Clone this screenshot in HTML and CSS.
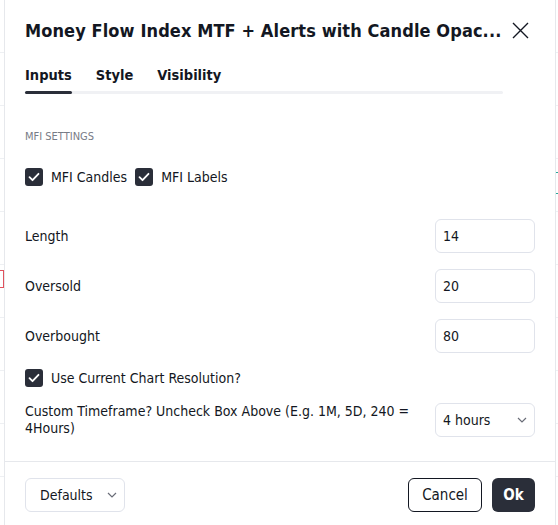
FILE: index.html
```html
<!DOCTYPE html>
<html>
<head>
<meta charset="utf-8">
<link rel="stylesheet" href="styles.css">
</head>
<body>
<div class="page">
  <div class="chart-mark red"></div>
  <div class="chart-mark teal"></div>
  <div class="dialog">
    <div class="header">
      <div class="title">Money Flow Index MTF + Alerts with Candle Opac...</div>
      <svg class="close" width="17" height="17" viewBox="0 0 17 17"><path d="M1 1l15 15M16 1L1 16" stroke="#131722" stroke-width="1.4" fill="none"/></svg>
    </div>
    <div class="tabs">
      <div class="tab active">Inputs</div>
      <div class="tab">Style</div>
      <div class="tab">Visibility</div>
    </div>
    <div class="tabline"><div class="tabind"></div></div>
    <div class="content">
      <div class="section">MFI SETTINGS</div>
      <div class="checks">
        <label class="check"><span class="box"><svg width="12" height="10" viewBox="0 0 12 10"><path d="M1.5 5.2l3 3 6-6.4" stroke="#fff" stroke-width="1.8" fill="none" stroke-linecap="round" stroke-linejoin="round"/></svg></span>MFI Candles</label>
        <label class="check"><span class="box"><svg width="12" height="10" viewBox="0 0 12 10"><path d="M1.5 5.2l3 3 6-6.4" stroke="#fff" stroke-width="1.8" fill="none" stroke-linecap="round" stroke-linejoin="round"/></svg></span>MFI Labels</label>
      </div>
      <div class="row first"><span class="label">Length</span><div class="input">14</div></div>
      <div class="row"><span class="label">Oversold</span><div class="input">20</div></div>
      <div class="row"><span class="label">Overbought</span><div class="input">80</div></div>
      <div class="checks single">
        <label class="check"><span class="box"><svg width="12" height="10" viewBox="0 0 12 10"><path d="M1.5 5.2l3 3 6-6.4" stroke="#fff" stroke-width="1.8" fill="none" stroke-linecap="round" stroke-linejoin="round"/></svg></span>Use Current Chart Resolution?</label>
      </div>
      <div class="row tf"><span class="label wrap">Custom Timeframe? Uncheck Box Above (E.g. 1M, 5D, 240 = 4Hours)</span><div class="input select">4 hours<svg width="10" height="6" viewBox="0 0 10 6"><path d="M1 1l4 4 4-4" stroke="#6a6d78" stroke-width="1.2" fill="none"/></svg></div></div>
    </div>
    <div class="footer">
      <div class="btn defaults">Defaults<svg width="10" height="6" viewBox="0 0 10 6"><path d="M1 1l4 4 4-4" stroke="#6a6d78" stroke-width="1.2" fill="none"/></svg></div>
      <div class="spacer"></div>
      <div class="btn cancel">Cancel</div>
      <div class="btn ok">Ok</div>
    </div>
  </div>
</div>
</body>
</html>
```
FILE: styles.css
```css
html, body {
  margin: 0;
  padding: 0;
  background: #fff;
}
body {
  font-family: "DejaVu Sans Condensed", "Lato", sans-serif;
  color: #131722;
}
.page {
  position: relative;
  width: 558px;
  height: 525px;
  overflow: hidden;
  background:
    repeating-linear-gradient(to bottom, transparent 0, transparent 52px, #eef0f3 52px, #eef0f3 53px);
}
.chart-mark {
  position: absolute;
}
.chart-mark.red {
  left: 0;
  top: 270px;
  width: 3px;
  height: 16px;
  border: 1px solid #e0525d;
  border-left: none;
}
.chart-mark.teal {
  right: 0;
  top: 172px;
  width: 2px;
  height: 20px;
  border: 1px solid #26a69a;
  border-right: none;
}
.dialog {
  position: absolute;
  left: 4px;
  top: 0;
  width: 550px;
  height: 525px;
  background: #fff;
  border-left: 1px solid #e6e8ec;
  border-right: 1px solid #e6e8ec;
  display: flex;
  flex-direction: column;
}
.header {
  display: flex;
  align-items: center;
  padding: 17px 26px 0 20px;
  height: 26px;
}
.title {
  flex: 1;
  font-size: 18px;
  font-weight: 700;
  letter-spacing: 0.1px;
  white-space: nowrap;
  overflow: hidden;
}
.close {
  margin-left: 8px;
  flex: none;
}
.tabs {
  display: flex;
  gap: 24px;
  padding: 22px 20px 0 20px;
}
.tab {
  font-size: 14.5px;
  font-weight: 700;
  line-height: 20px;
}
.tabline {
  margin: 6px 52px 0 20px;
  height: 3px;
  background: #f0f1f4;
  border-radius: 2px;
}
.tabind {
  width: 47px;
  height: 3px;
  border-radius: 2px;
  background: #2a2e39;
}
.content {
  flex: 1;
  padding: 0 20px;
}
.section {
  margin-top: 36px;
  font-size: 11px;
  color: #787b86;
  text-transform: uppercase;
  line-height: 14px;
}
.checks {
  display: flex;
  gap: 8px;
  margin-top: 24px;
}
.checks.single {
  margin-top: 16px;
}
.check {
  display: flex;
  align-items: center;
  font-size: 14px;
  line-height: 18px;
}
.box {
  width: 18px;
  height: 18px;
  border-radius: 3px;
  background: #2a2e39;
  display: flex;
  align-items: center;
  justify-content: center;
  margin-right: 8px;
}
.row {
  display: flex;
  align-items: center;
  justify-content: space-between;
  margin-top: 16px;
  font-size: 14px;
}
.row.first {
  margin-top: 33px;
}
.row.tf {
  margin-top: 16px;
}
.label.wrap {
  width: 385px;
  line-height: 17px;
}
.input {
  box-sizing: border-box;
  width: 100px;
  height: 34px;
  border: 1px solid #e0e3eb;
  border-radius: 6px;
  padding: 0 7px;
  display: flex;
  align-items: center;
  justify-content: space-between;
}
.footer {
  border-top: 1px solid #e6e8ec;
  display: flex;
  align-items: center;
  padding: 16px 20px 13px 20px;
  gap: 10px;
}
.spacer {
  flex: 1;
}
.btn {
  box-sizing: border-box;
  height: 34px;
  border-radius: 6px;
  font-size: 14px;
  display: flex;
  align-items: center;
}
.defaults {
  width: 100px;
  border: 1px solid #e0e3eb;
  padding: 0 7px 0 14px;
  justify-content: space-between;
}
.cancel {
  width: 74px;
  border: 1px solid #131722;
  justify-content: center;
  font-size: 15px;
}
.ok {
  width: 43px;
  background: #2a2e39;
  color: #fff;
  font-weight: 700;
  justify-content: center;
  font-size: 15px;
}
```
